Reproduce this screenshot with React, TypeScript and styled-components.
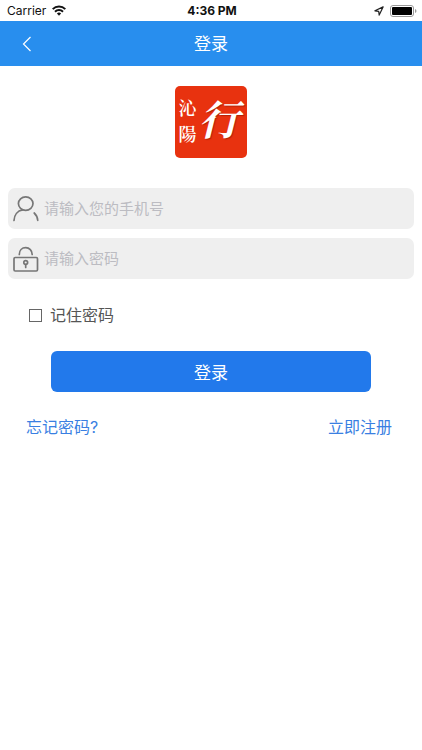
import React from 'react';
import styled, { createGlobalStyle } from 'styled-components';

const GlobalStyle = createGlobalStyle`
  * { box-sizing: border-box; }
  body {
    margin: 0;
    background: #fff;
    font-family: Inter, "Noto Sans CJK SC", sans-serif;
  }
  button, input { font: inherit; }
`;

const Screen = styled.div`
  min-height: 100vh;
  background: #fff;
`;

const StatusBar = styled.div`
  display: grid;
  grid-template-columns: 1fr auto 1fr;
  align-items: center;
  height: 21px;
  padding: 0 5px 0 7px;
  color: #111;
  font-size: 12px;
  line-height: 20px;
`;

const StatusGroup = styled.div<{ $end?: boolean }>`
  display: flex;
  align-items: center;
  justify-content: ${({ $end }) => ($end ? 'flex-end' : 'flex-start')};
  gap: 6px;
`;

const Clock = styled.time`
  font-size: 12px;
  font-weight: 700;
`;

const Header = styled.header`
  display: grid;
  grid-template-columns: 54px 1fr 54px;
  align-items: center;
  height: 45px;
  background: #288eee;
  color: #fff;
`;

const BackButton = styled.button`
  display: flex;
  align-items: center;
  justify-content: center;
  height: 45px;
  padding: 0;
  border: 0;
  background: none;
  color: inherit;
`;

const Title = styled.h1`
  margin: 0;
  font-size: 17px;
  font-weight: 400;
  line-height: 24px;
  text-align: center;
`;

const Form = styled.form`
  display: flex;
  flex-direction: column;
  padding: 20px 8px 0;
`;

const Logo = styled.div`
  display: flex;
  align-items: center;
  justify-content: center;
  gap: 2px;
  align-self: center;
  width: 72px;
  height: 72px;
  margin-bottom: 30px;
  padding-right: 4px;
  border-radius: 5px;
  background: #e8320f;
  color: #fff;
  font-family: "Noto Serif CJK SC", "Noto Sans CJK SC", sans-serif;
`;

const LogoTown = styled.span`
  display: flex;
  flex-direction: column;
  gap: 2px;
  padding-bottom: 4px;
  font-size: 18px;
  font-weight: 600;
  line-height: 24px;
`;

const LogoMark = styled.span`
  padding-bottom: 8px;
  font-size: 41px;
  font-style: italic;
  font-weight: 700;
  line-height: 60px;
  text-shadow: 1px 1px 1px #b02208;
`;

const Field = styled.label`
  display: flex;
  align-items: center;
  gap: 5px;
  height: 41px;
  margin-bottom: 9px;
  padding: 0 5px;
  border-radius: 7px;
  background: #efefef;
`;

const FieldInput = styled.input`
  flex: 1;
  min-width: 0;
  height: 41px;
  padding: 0;
  border: 0;
  outline: 0;
  background: none;
  color: #444;
  font-size: 15px;

  &::placeholder { color: #bcbcc2; opacity: 1; }
`;

const Remember = styled.label`
  display: flex;
  align-items: center;
  align-self: flex-start;
  gap: 8px;
  margin: 15px 0 24px 21px;
  color: #555;
  font-size: 16px;
  line-height: 24px;
`;

const CheckBox = styled.input`
  appearance: none;
  width: 13px;
  height: 13px;
  margin: 0;
  border: 1px solid #666;
  background: #fff;

  &:checked { background: #666; box-shadow: inset 0 0 0 2px #fff; }
`;

const Submit = styled.button`
  height: 41px;
  margin: 0 43px;
  padding: 0;
  border: 0;
  border-radius: 6px;
  background: #2279eb;
  color: #fff;
  font-size: 17px;
`;

const Links = styled.nav`
  display: flex;
  justify-content: space-between;
  padding: 23px 22px 0 18px;
`;

const TextLink = styled.a`
  color: #3a7fe2;
  font-size: 16px;
  line-height: 24px;
  text-decoration: none;
`;

const WifiIcon = () => (
  <svg width="14" height="11" viewBox="0 0 14 11" aria-hidden="true">
    <g fill="none" stroke="#111" strokeWidth="2">
      <path d="M.7 4.1a9 9 0 0 1 12.6 0" />
      <path d="M3 6.7a5.7 5.7 0 0 1 8 0" />
    </g>
    <path d="M7 10.8 4.9 8.6a3 3 0 0 1 4.2 0z" fill="#111" />
  </svg>
);

const LocationIcon = () => (
  <svg width="10" height="10" viewBox="0 0 10 10" aria-hidden="true">
    <path d="M9.1.9.9 4.8l3.8.5.5 3.8z" fill="none" stroke="#222" strokeWidth="1.2" strokeLinejoin="round" />
  </svg>
);

const BatteryIcon = () => (
  <svg width="27" height="12" viewBox="0 0 27 12" aria-hidden="true">
    <rect x=".5" y=".5" width="23" height="11" rx="2.5" fill="#fff" stroke="#999" />
    <rect x="2" y="2" width="20" height="8" rx="1" fill="#000" />
    <path d="M25 4q1.5.5 1.5 2T25 8z" fill="#999" />
  </svg>
);

const BackIcon = () => (
  <svg width="10" height="16" viewBox="0 0 10 16" aria-hidden="true">
    <path d="M8.5 1 1.5 8l7 7" fill="none" stroke="currentColor" strokeWidth="1.2" />
  </svg>
);

const PersonIcon = () => (
  <svg width="26" height="26" viewBox="0 0 26 26" aria-hidden="true">
    <g fill="none" stroke="#777" strokeWidth="1.7" strokeLinecap="round">
      <ellipse cx="12.7" cy="7.6" rx="7.3" ry="6.7" />
      <path d="M1 24.500c.2-5.500 3.500-9.800 8.600-10.700M21.200 17c2.200 2 3.300 4.400 3.500 7.300" />
    </g>
  </svg>
);

const LockIcon = () => (
  <svg width="26" height="26" viewBox="0 0 26 26" aria-hidden="true">
    <g fill="none" stroke="#777" strokeWidth="1.7" strokeLinecap="round">
      <rect x="1" y="11.500" width="23.500" height="13.500" rx="1.200" />
      <path d="M6.300 8.500C6.300 4.500 9 1.700 12.700 1.700s6.500 2.800 6.500 6.800" />
      <circle cx="12.700" cy="16.500" r="1.900" />
      <path d="M12.700 18.500v3" />
    </g>
  </svg>
);

export default function App() {
  return (
    <Screen>
      <GlobalStyle />
      <StatusBar>
        <StatusGroup>
          <span>Carrier</span>
          <WifiIcon />
        </StatusGroup>
        <Clock>4:36 PM</Clock>
        <StatusGroup $end>
          <LocationIcon />
          <BatteryIcon />
        </StatusGroup>
      </StatusBar>
      <Header>
        <BackButton type="button" aria-label="返回">
          <BackIcon />
        </BackButton>
        <Title>登录</Title>
      </Header>
      <Form onSubmit={(event) => event.preventDefault()}>
        <Logo>
          <LogoTown>
            <span>沁</span>
            <span>陽</span>
          </LogoTown>
          <LogoMark>行</LogoMark>
        </Logo>
        <Field>
          <PersonIcon />
          <FieldInput type="tel" aria-label="手机号" placeholder="请输入您的手机号" />
        </Field>
        <Field>
          <LockIcon />
          <FieldInput type="password" aria-label="密码" placeholder="请输入密码" />
        </Field>
        <Remember>
          <CheckBox type="checkbox" />
          记住密码
        </Remember>
        <Submit type="submit">登录</Submit>
        <Links>
          <TextLink href="#forgot">忘记密码?</TextLink>
          <TextLink href="#register">立即注册</TextLink>
        </Links>
      </Form>
    </Screen>
  );
}
